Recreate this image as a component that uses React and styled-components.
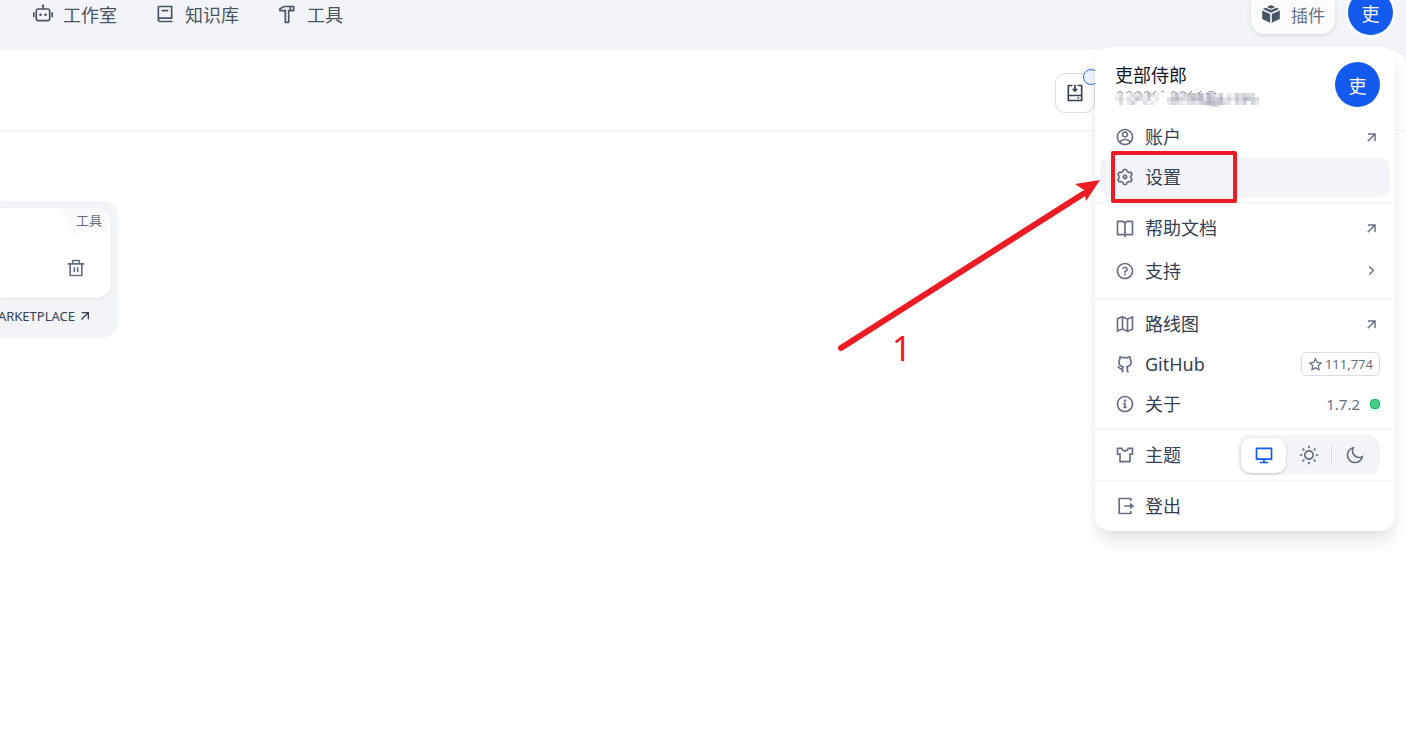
import React, { useState } from 'react';
import styled, { createGlobalStyle } from 'styled-components';
import {
    RiRobot2Line, RiBook2Line, RiHammerLine, RiInstallLine, RiAccountCircleLine,
    RiSettings3Line, RiBookOpenLine, RiQuestionLine, RiMap2Line, RiGithubLine,
    RiInformation2Line, RiTShirt2Line, RiComputerLine, RiSunLine, RiMoonLine,
    RiLogoutBoxRLine, RiArrowRightUpLine, RiArrowRightSLine, RiStarLine, RiDeleteBinLine,
} from 'react-icons/ri';

const GlobalStyle = createGlobalStyle`
    * {
        box-sizing: border-box;
    }
    body {
        margin: 0;
        overflow: hidden;
        background: #f2f4f7;
        color: #354052;
        font-family: "Noto Sans", "Noto Sans CJK SC", sans-serif;
        font-size: 18px;
        font-weight: 400;
    }
    button {
        font: inherit;
        color: inherit;
        border: 0;
        padding: 0;
        background: none;
        cursor: pointer;
    }
    a {
        color: inherit;
        text-decoration: none;
    }
`

const Page = styled.div`
    position: relative;
    display: flex;
    flex-direction: column;
    min-height: 100vh;
`

const Header = styled.header`
    display: flex;
    justify-content: space-between;
    align-items: flex-start;
    height: 50px;
    padding: 0 13px 0 33px;
`

const Nav = styled.nav`
    display: flex;
    gap: 38px;
    height: 30px;
`

const NavLink = styled.a`
    display: flex;
    align-items: center;
    gap: 10px;
    color: #495464;
    line-height: 30px;

    > svg {
        margin-bottom: 2px;
    }
`

const HeaderRight = styled.div`
    display: flex;
    gap: 13px;
    margin-top: -10px;
`

const PluginButton = styled.button`
    display: flex;
    align-items: center;
    gap: 10px;
    height: 44px;
    padding: 4px 10px 0;
    border-radius: 14px;
    background: #fcfcfd;
    box-shadow: 0 2px 5px rgba(16, 24, 40, 0.1);
    color: #676f83;
    font-size: 17px;

    > svg {
        color: #495464;
    }
`

const Avatar = styled.span`
    display: flex;
    align-items: center;
    justify-content: center;
    flex: none;
    width: 45px;
    height: 45px;
    border-radius: 50%;
    background: #155aef;
    color: #fff;
    font-size: 18px;
    box-shadow: ${props => props.$ring ? '0 0 0 3px #fcfcfd' : 'none'};
`

const Main = styled.main`
    flex: 1;
    border-radius: 0 16px 0 0;
    background: #fff;
`

const Toolbar = styled.div`
    display: flex;
    justify-content: flex-end;
    height: 81px;
    padding: 23px 311px 0 0;
    border-bottom: 1px solid #f2f4f7;
`

const InstallButton = styled.button`
    position: relative;
    display: flex;
    align-items: center;
    justify-content: center;
    width: 40px;
    height: 40px;
    border: 1px solid #d9dce3;
    border-radius: 10px;
    background: #fff;
    color: #354052;
`

const ProgressDot = styled.span`
    position: absolute;
    top: -5px;
    right: -5px;
    width: 16px;
    height: 16px;
    border: 1px solid #296dff;
    border-radius: 50%;
    background: #eff4ff;
`

const PluginCard = styled.article`
    width: 118px;
    height: 137px;
    margin-top: 70px;
    padding: 7px 7px 0 0;
    border-radius: 0 16px 16px 0;
    background: #f2f4f7;
`

const CardBody = styled.div`
    display: flex;
    flex-direction: column;
    align-items: flex-end;
    height: 90px;
    border-radius: 0 15px 15px 0;
    overflow: hidden;
    background: #fff;
    box-shadow: 0 1px 3px rgba(16, 24, 40, 0.08);
`

const CornerTag = styled.span`
    padding: 0 9px 0 17px;
    background: #f9fafb;
    clip-path: polygon(0 0, 100% 0, 100% 100%, 16px 100%, 12px 92%);
    color: #676f83;
    font-size: 13px;
    line-height: 25px;
`

const DeleteButton = styled.button`
    display: flex;
    margin: 25px 25px 0 0;
    color: #676f83;
`

const CardFooter = styled.a`
    display: flex;
    justify-content: flex-end;
    align-items: center;
    gap: 2px;
    height: 36px;
    padding-right: 18px;
    overflow: hidden;
    white-space: nowrap;
    color: #354052;
    font-size: 13px;

    > svg {
        flex: none;
    }
`

const Menu = styled.aside`
    position: absolute;
    top: 47px;
    right: 11px;
    width: 300px;
    border-radius: 15px;
    background: #fff;
    box-shadow: 0 15px 20px -5px rgba(16, 24, 40, 0.1), 0 4px 12px rgba(16, 24, 40, 0.04);
`

const UserRow = styled.div`
    display: flex;
    justify-content: space-between;
    height: 70px;
    padding: 15px 15px 0 20px;
`

const UserName = styled.div`
    color: #101828;
    line-height: 26px;
`

const MenuSection = styled.section`
    padding: ${props => props.$first ? '0 5px 5px' : '5px'};
    border-top: ${props => props.$first ? '0' : '1px solid #f2f4f7'};
`

const MenuItem = styled.button`
    display: flex;
    align-items: center;
    gap: 10px;
    width: 100%;
    height: ${props => props.$tall ? '45px' : '40px'};
    padding: 0 10px 0 15px;
    border-radius: 10px;
    background: ${props => props.$active ? '#f2f4f7' : 'transparent'};
    text-align: left;

    > svg {
        flex: none;
        color: #676f83;
    }
`

const ThemeRow = styled(MenuItem).attrs({ as: 'div' })``

const ItemLabel = styled.span`
    flex: 1;
    line-height: 24px;
`

const StarCount = styled.span`
    display: flex;
    align-items: center;
    gap: 2px;
    height: 24px;
    padding: 0 6px;
    border: 1px solid #d9dce3;
    border-radius: 6px;
    color: #676f83;
    font-size: 13px;
`

const Version = styled.span`
    display: flex;
    align-items: center;
    gap: 10px;
    color: #676f83;
    font-size: 15px;
`

const StatusDot = styled.i`
    width: 10px;
    height: 10px;
    border: 1px solid #17b26a;
    border-radius: 4px;
    background: #47cd89;
    box-shadow: 0 2px 4px rgba(71, 205, 137, 0.3);
`

const ThemeSwitch = styled.div`
    display: flex;
    align-items: center;
    height: 40px;
    padding: 2px 3px;
    border-radius: 12px;
    background: #f2f4f7;
`

const ThemeButton = styled.button`
    display: flex;
    align-items: center;
    justify-content: center;
    width: 45px;
    height: 35px;
    border-radius: 10px;
    background: ${props => props.$on ? '#fff' : 'transparent'};
    box-shadow: ${props => props.$on ? '0 1px 3px rgba(16, 24, 40, 0.2)' : 'none'};
    color: ${props => props.$on ? '#155aef' : '#676f83'};
`

const ThemeDivider = styled.i`
    width: 1px;
    height: 18px;
    background: #d9dce3;
`

const Marks = styled.svg`
    position: absolute;
    top: 0;
    right: 0;
    width: 600px;
    height: 400px;
    pointer-events: none;
    font-family: "Noto Sans", sans-serif;
    font-size: 34px;
`

// masked e-mail address: one digit per cell, 0 is empty and 9 is darkest
const MASK_ROWS = [
    '1301324153100035245546264240214343300',
    '2413253240200356434656365462425365430',
    '0302410312000243213324576553204240420',
    '0000000000000000000000024310000000000',
];

const MaskedMail = () => (
    <svg width="150" height="17" role="img" aria-label="masked e-mail">
        <path
            d="M2 3q3-3 6 0M11 3q3-3 6 0M20 3q3-3 6 0M29 3q3-3 6 0M41 1l-3 3M46 2l3-1M56 3q3-3 6 0M65 3q3-3 6 0M77 1l-3 3M86 1l-3 3M91 4q5-5 10 0"
            fill="none" stroke="#676f83" opacity="0.8"
        />
        {MASK_ROWS.map((row, y) => row.split('').map((shade, x) => (
            <rect key={`${x}-${y}`} x={x * 4} y={y * 4 + 3} width="4" height="4" fill="#676f83" opacity={shade / 13} />
        )))}
    </svg>
);

const PluginIcon = () => (
    <svg width="20" height="20" viewBox="0 0 20 20" fill="currentColor">
        <path d="M10 4.800 5.800 2.900 10 1l4.200 1.900z" />
        <path d="M4.700 3.700 1.800 5 10 8.700 18.200 5l-2.900-1.300L10 6.100z" />
        <path d="M1.200 6.500 9.200 10.100v8.700l-8-3.700z" />
        <path d="M18.800 6.500 10.800 10.100v8.700l8-3.700z" />
    </svg>
);

const App = () => {
    const [theme, setTheme] = useState('system');

    return (
        <Page>
            <GlobalStyle />
            <Header>
                <Nav>
                    <NavLink href="#studio"><RiRobot2Line size={20} />工作室</NavLink>
                    <NavLink href="#knowledge"><RiBook2Line size={20} />知识库</NavLink>
                    <NavLink href="#tools"><RiHammerLine size={20} />工具</NavLink>
                </Nav>
                <HeaderRight>
                    <PluginButton><PluginIcon />插件</PluginButton>
                    <button aria-label="account"><Avatar $ring>吏</Avatar></button>
                </HeaderRight>
            </Header>
            <Main>
                <Toolbar>
                    <InstallButton aria-label="install">
                        <RiInstallLine size={20} />
                        <ProgressDot />
                    </InstallButton>
                </Toolbar>
                <PluginCard>
                    <CardBody>
                        <CornerTag>工具</CornerTag>
                        <DeleteButton aria-label="delete"><RiDeleteBinLine size={20} /></DeleteButton>
                    </CardBody>
                    <CardFooter href="#marketplace">ARKETPLACE <RiArrowRightUpLine size={16} /></CardFooter>
                </PluginCard>
            </Main>

            <Menu>
                <UserRow>
                    <div>
                        <UserName>吏部侍郎</UserName>
                        <MaskedMail />
                    </div>
                    <Avatar>吏</Avatar>
                </UserRow>
                <MenuSection $first>
                    <MenuItem>
                        <RiAccountCircleLine size={20} />
                        <ItemLabel>账户</ItemLabel>
                        <RiArrowRightUpLine size={17} />
                    </MenuItem>
                    <MenuItem $active>
                        <RiSettings3Line size={20} />
                        <ItemLabel>设置</ItemLabel>
                    </MenuItem>
                </MenuSection>
                <MenuSection>
                    <MenuItem>
                        <RiBookOpenLine size={20} />
                        <ItemLabel>帮助文档</ItemLabel>
                        <RiArrowRightUpLine size={17} />
                    </MenuItem>
                    <MenuItem $tall>
                        <RiQuestionLine size={20} />
                        <ItemLabel>支持</ItemLabel>
                        <RiArrowRightSLine size={17} />
                    </MenuItem>
                </MenuSection>
                <MenuSection>
                    <MenuItem>
                        <RiMap2Line size={20} />
                        <ItemLabel>路线图</ItemLabel>
                        <RiArrowRightUpLine size={17} />
                    </MenuItem>
                    <MenuItem>
                        <RiGithubLine size={20} />
                        <ItemLabel>GitHub</ItemLabel>
                        <StarCount><RiStarLine size={15} />111,774</StarCount>
                    </MenuItem>
                    <MenuItem>
                        <RiInformation2Line size={20} />
                        <ItemLabel>关于</ItemLabel>
                        <Version>1.7.2<StatusDot /></Version>
                    </MenuItem>
                </MenuSection>
                <MenuSection>
                    <ThemeRow>
                        <RiTShirt2Line size={20} />
                        <ItemLabel>主题</ItemLabel>
                        <ThemeSwitch>
                            <ThemeButton aria-label="system" $on={theme === 'system'} onClick={() => setTheme('system')}><RiComputerLine size={20} /></ThemeButton>
                            <ThemeButton aria-label="light" $on={theme === 'light'} onClick={() => setTheme('light')}><RiSunLine size={20} /></ThemeButton>
                            <ThemeDivider />
                            <ThemeButton aria-label="dark" $on={theme === 'dark'} onClick={() => setTheme('dark')}><RiMoonLine size={20} /></ThemeButton>
                        </ThemeSwitch>
                    </ThemeRow>
                </MenuSection>
                <MenuSection>
                    <MenuItem>
                        <RiLogoutBoxRLine size={20} />
                        <ItemLabel>登出</ItemLabel>
                    </MenuItem>
                </MenuSection>
            </Menu>

            <Marks viewBox="0 0 600 400">
                <path d="M35 348 277 194" stroke="#ed1c24" strokeWidth="6" strokeLinecap="round" />
                <path d="M294 180 269 184 278 190 280 201z" fill="#ed1c24" />
                <rect x="307" y="153" width="122" height="48" fill="none" stroke="#ed1c24" strokeWidth="4" strokeLinejoin="round" />
                <text x="86" y="361" fill="#ed1c24">1</text>
            </Marks>
        </Page>
    );
};

export default App;
